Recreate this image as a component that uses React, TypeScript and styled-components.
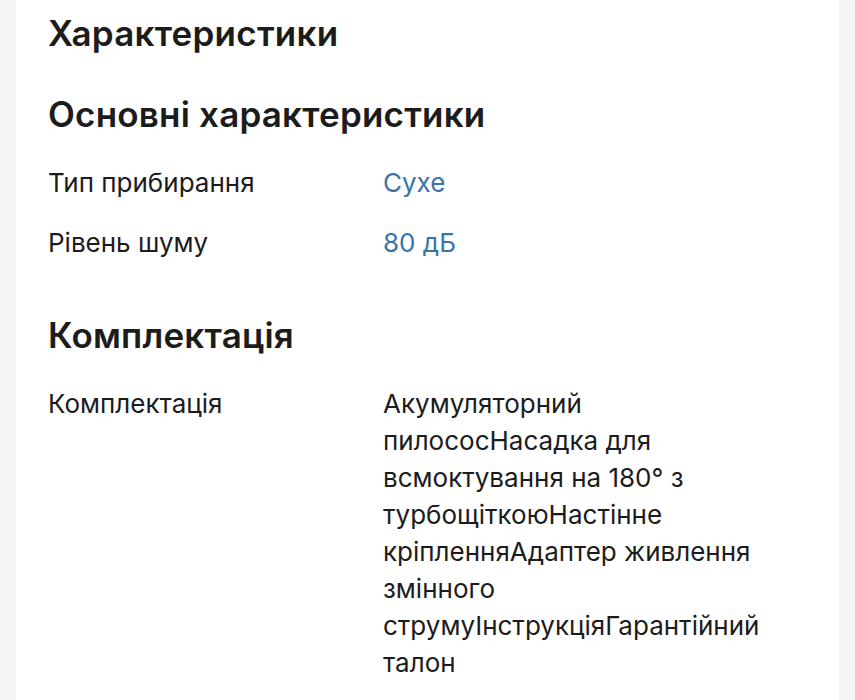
import React from 'react';
import styled, { createGlobalStyle } from 'styled-components';

const GlobalStyle = createGlobalStyle`
  body {
    margin: 0;
    background: #f4f4f4;
    font-family: Inter, "Noto Sans", sans-serif;
    color: #1c1c1c;
  }
`;

type Spec = { label: string; value: string; link?: boolean };

const groups: { title: string; specs: Spec[] }[] = [
  {
    title: 'Основні характеристики',
    specs: [
      { label: 'Тип прибирання', value: 'Сухе', link: true },
      { label: 'Рівень шуму', value: '80 дБ', link: true },
    ],
  },
  {
    title: 'Комплектація',
    specs: [
      {
        label: 'Комплектація',
        value:
          'Акумуляторний пилососНасадка для всмоктування на 180° з турбощіткоюНастінне кріпленняАдаптер живлення змінного струмуІнструкціяГарантійний талон',
      },
    ],
  },
];

const Page = styled.div`
  padding: 0 16px;
  min-height: 700px;
`;

const Card = styled.section`
  background: #fff;
  min-height: 700px;
  padding: 12px 32px 0;
`;

const Title = styled.h2`
  margin: 0;
  font-size: 35px;
  line-height: 42px;
  font-weight: 600;
  letter-spacing: 0.25px;
`;

const Group = styled.div`
  margin-top: 39px;

  & + & {
    margin-top: 42px;
  }
`;

const GroupTitle = styled.h3`
  margin: 0 0 17px;
  font-size: 35px;
  line-height: 42px;
  font-weight: 600;
  letter-spacing: 0.2px;
`;

const Row = styled.div`
  display: grid;
  grid-template-columns: 335px 390px;
  padding: 11.5px 0;
  font-size: 26px;
  line-height: 37px;
`;

const Label = styled.div`
  color: #1c1c1c;
`;

const Value = styled.div<{ $link?: boolean }>`
  color: ${(p) => (p.$link ? '#3a74a6' : '#1c1c1c')};
`;

export default function App() {
  return (
    <Page>
      <GlobalStyle />
      <Card>
        <Title>Характеристики</Title>
        {groups.map((g) => (
          <Group key={g.title}>
            <GroupTitle>{g.title}</GroupTitle>
            {g.specs.map((s) => (
              <Row key={s.label}>
                <Label>{s.label}</Label>
                <Value $link={s.link}>{s.value}</Value>
              </Row>
            ))}
          </Group>
        ))}
      </Card>
    </Page>
  );
}
